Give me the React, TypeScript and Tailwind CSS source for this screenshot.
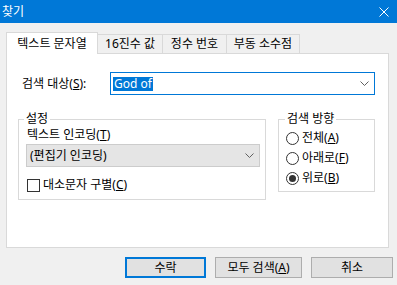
import React from 'react';

// 찾기 대화상자 (Windows 스타일)
const FONT = '"Noto Sans", "Noto Sans CJK KR", sans-serif';

function Chevron({ className }: { className?: string }) {
  return (
    <svg width="9" height="5" viewBox="0 0 9 5" className={className}>
      <path d="M0.5 0.5 L4.5 4.5 L8.5 0.5" fill="none" stroke="#606060" strokeWidth="1" />
    </svg>
  );
}

function Radio({ checked, children }: { checked?: boolean; children: React.ReactNode }) {
  return (
    <div className="flex items-center h-[20px]">
      <span className="w-[13px] h-[13px] rounded-full border border-[#333] bg-white flex items-center justify-center">
        {checked && <span className="w-[7px] h-[7px] rounded-full bg-[#333]" />}
      </span>
      <span className="ml-[3px] leading-[16px]">{children}</span>
    </div>
  );
}

function Button({ w, primary, children }: { w: string; primary?: boolean; children: React.ReactNode }) {
  return (
    <button
      className={`${w} h-[21px] bg-[#e1e1e1] flex items-center justify-center leading-[16px] ${
        primary ? 'border-2 border-[#0078d7]' : 'border border-[#adadad]'
      }`}
    >
      {children}
    </button>
  );
}

export default function App() {
  return (
    <div
      className="w-[397px] h-[285px] bg-[#f0f0f0] overflow-hidden text-[12px] text-black"
      style={{ fontFamily: FONT }}
    >
      {/* 제목 표시줄 */}
      <div className="h-[23px] bg-[#0078d7] flex items-center justify-between pl-[2px] pr-[8px] text-white">
        <span className="leading-[16px]">찾기</span>
        <svg width="10" height="10" viewBox="0 0 10 10">
          <path d="M0.5 0.5 L9.5 9.5 M9.5 0.5 L0.5 9.5" stroke="white" strokeWidth="1" />
        </svg>
      </div>

      {/* 탭 */}
      <div className="mt-[9px] ml-[6px] flex h-[21px]">
        <div className="relative z-10 self-start w-[92px] h-[22px] bg-white border border-b-0 border-[#d9d9d9] flex items-center justify-center leading-[16px]">
          텍스트 문자열
        </div>
        <div className="self-end w-[65px] h-[19px] border-t border-r border-[#d9d9d9] flex items-center justify-center leading-[16px]">
          16진수 값
        </div>
        <div className="self-end w-[64px] h-[19px] border-t border-r border-[#d9d9d9] flex items-center justify-center leading-[16px]">
          정수 번호
        </div>
        <div className="self-end w-[73px] h-[19px] border-t border-r border-[#d9d9d9] flex items-center justify-center leading-[16px]">
          부동 소수점
        </div>
      </div>

      {/* 탭 내용 */}
      <div className="ml-[6px] w-[383px] h-[195px] border border-[#d9d9d9] bg-white">
        <div className="mt-[18px] flex items-center">
          <div className="w-[103px] pl-[15px] leading-[16px]">
            검색 대상(<u>S</u>):
          </div>
          <div className="w-[265px] h-[23px] border border-[#0078d7] flex items-center justify-between pl-[2px] pr-[5px]">
            <span className="bg-[#0078d7] text-white leading-[14px] px-[1px]">God of</span>
            <Chevron />
          </div>
        </div>

        <div className="mt-[16px] ml-[11px] flex gap-[12px] items-start">
          <fieldset className="w-[248px] h-[89px] border border-[#d9d9d9]">
            <legend className="ml-[5px] px-[2px] leading-[16px]">설정</legend>
            <div className="pl-[7px]">
              <div className="leading-[16px] pl-[1px]">
                텍스트 인코딩(<u>T</u>)
              </div>
              <div className="mt-[1px] w-[234px] h-[23px] bg-[#e5e5e5] border border-[#cccccc] flex items-center justify-between pl-[3px] pr-[5px]">
                <span className="leading-[16px]">(편집기 인코딩)</span>
                <Chevron />
              </div>
              <div className="mt-[10px] ml-[1px] flex items-center">
                <span className="w-[13px] h-[13px] border border-[#333] bg-white" />
                <span className="ml-[3px] leading-[16px]">
                  대소문자 구별(<u>C</u>)
                </span>
              </div>
            </div>
          </fieldset>

          <fieldset className="w-[97px] h-[81px] border border-[#d9d9d9]">
            <legend className="ml-[6px] px-[2px] leading-[16px]">검색 방향</legend>
            <div className="pl-[7px] pt-[1px]">
              <Radio>
                전체(<u>A</u>)
              </Radio>
              <Radio>
                아래로(<u>F</u>)
              </Radio>
              <Radio checked>
                위로(<u>B</u>)
              </Radio>
            </div>
          </fieldset>
        </div>
      </div>

      {/* 버튼 */}
      <div className="mt-[9px] ml-[125px] flex gap-[9px]">
        <Button w="w-[81px]" primary>
          수락
        </Button>
        <Button w="w-[87px]">
          모두 검색(<u>A</u>)
        </Button>
        <Button w="w-[82px]">취소</Button>
      </div>
    </div>
  );
}
